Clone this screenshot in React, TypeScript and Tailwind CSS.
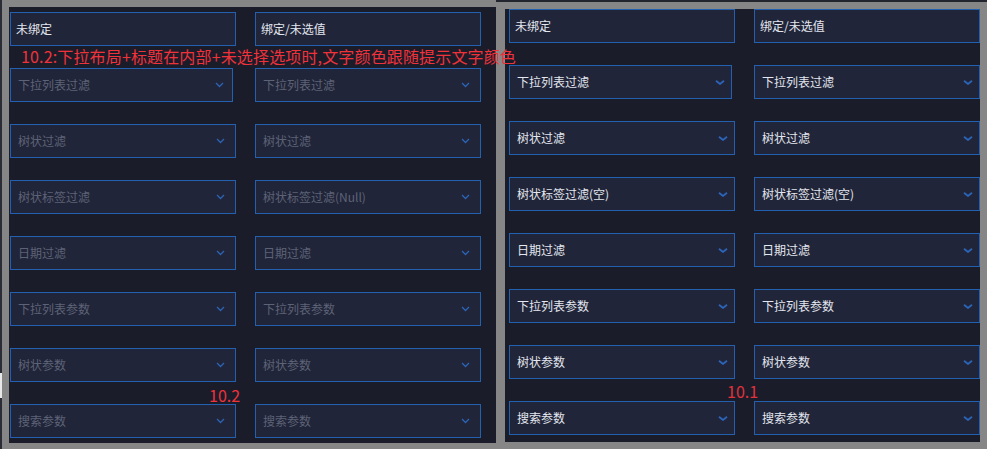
import React from 'react';

const FONT = { fontFamily: '"Microsoft YaHei", "Noto Sans CJK SC", "Noto Sans", sans-serif' };

interface FieldProps {
  text: string;
  filled?: boolean;
  chevron?: boolean;
  wide?: boolean;
  variant: 'left' | 'right';
  first?: boolean;
}

function ChevronSmall() {
  return (
    <svg width="9" height="6" viewBox="0 0 9 6" className="shrink-0">
      <polyline points="1,1 4.5,4.5 8,1" fill="none" stroke="#2c63b5" strokeWidth="1.3" />
    </svg>
  );
}

function ChevronBold() {
  return (
    <svg width="10" height="5" viewBox="0 0 10 5" className="shrink-0">
      <polyline points="1,0.8 5,4 9,0.8" fill="none" stroke="#2b64b8" strokeWidth="1.8" />
    </svg>
  );
}

function Field({ text, filled, chevron, wide = true, variant, first }: FieldProps) {
  const width = wide ? 'w-[226px]' : 'w-[223px]';
  const pad = first ? 'pl-[5px]' : 'pl-[7px]';
  const padR = variant === 'left' ? (wide ? 'pr-[10px]' : 'pr-[8px]') : 'pr-[6px]';
  const color = filled ? 'text-[#e3e7ef]' : 'text-[#5d6377]';
  return (
    <div
      className={`${width} shrink-0 h-[34px] flex items-center justify-between border border-[#2460b0] bg-[#212539] ${pad} ${padR}`}
    >
      <span className={`text-[12px] leading-none ${color}`}>{text}</span>
      {chevron && (variant === 'left' ? <ChevronSmall /> : <ChevronBold />)}
    </div>
  );
}

const leftRows = [
  ['下拉列表过滤', '下拉列表过滤'],
  ['树状过滤', '树状过滤'],
  ['树状标签过滤', '树状标签过滤(Null)'],
  ['日期过滤', '日期过滤'],
  ['下拉列表参数', '下拉列表参数'],
  ['树状参数', '树状参数'],
  ['搜索参数', '搜索参数'],
];

const rightRows = [
  ['下拉列表过滤', '下拉列表过滤'],
  ['树状过滤', '树状过滤'],
  ['树状标签过滤(空)', '树状标签过滤(空)'],
  ['日期过滤', '日期过滤'],
  ['下拉列表参数', '下拉列表参数'],
  ['树状参数', '树状参数'],
  ['搜索参数', '搜索参数'],
];

function LeftPanel() {
  return (
    <div className="relative z-10 shrink-0 mt-[7px] ml-[7px] w-[487px] h-[436px] bg-[#1b1c2a] flex flex-col pl-[1px]">
      <div className="mt-[5px] flex gap-[19px]">
        <Field text="未绑定" filled variant="left" first />
        <Field text="绑定/未选值" filled variant="left" first />
      </div>
      <div className="h-[22px] pl-[11px] text-[16px] leading-[20px] tracking-[0.15px] text-[#f0323a] whitespace-nowrap">
        10.2:下拉布局+标题在内部+未选择选项时,文字颜色跟随提示文字颜色
      </div>
      {leftRows.map(([a, b], i) => (
        <React.Fragment key={a + i}>
          {i > 0 && (
            <div className="h-[22px] pl-[199px] text-[16px] leading-[22px] text-[#f0323a] pt-[2px]">
              {i === 6 ? '10.2' : ''}
            </div>
          )}
          <div className="flex gap-[19px]">
            <div className="w-[226px] shrink-0">
              <Field text={a} chevron wide={i !== 0} variant="left" />
            </div>
            <Field text={b} chevron variant="left" />
          </div>
        </React.Fragment>
      ))}
    </div>
  );
}

function RightPanel() {
  return (
    <div className="shrink-0 mt-[7px] ml-[9px] w-[475px] h-[433px] bg-[#1b1c2a] flex flex-col pl-[4px]">
      <div className="flex gap-[19px]">
        <Field text="未绑定" filled variant="right" first />
        <Field text="绑定/未选值" filled variant="right" first />
      </div>
      {rightRows.map(([a, b], i) => (
        <React.Fragment key={a + i}>
          <div className="h-[22px] pl-[218px] text-[16px] leading-[22px] text-[#e2323a] pt-[1px]">
            {i === 6 ? '10.1' : ''}
          </div>
          <div className="flex gap-[19px]">
            <div className="w-[226px] shrink-0">
              <Field text={a} filled chevron wide={i !== 0} variant="right" />
            </div>
            <Field text={b} filled chevron variant="right" />
          </div>
        </React.Fragment>
      ))}
    </div>
  );
}

export default function App() {
  return (
    <div className="w-[987px] h-[449px] bg-[#868686] flex overflow-hidden" style={FONT}>
      <div className="w-[2px] shrink-0 h-full bg-[#2a2c36] flex flex-col">
        <div className="mt-[373px] h-[25px] bg-[#e8e8e8]" />
      </div>
      <LeftPanel />
      <div className="flex flex-col shrink-0 w-[491px]">
        <div className="h-[2px] w-full bg-[#23252e]" />
        <RightPanel />
      </div>
    </div>
  );
}
